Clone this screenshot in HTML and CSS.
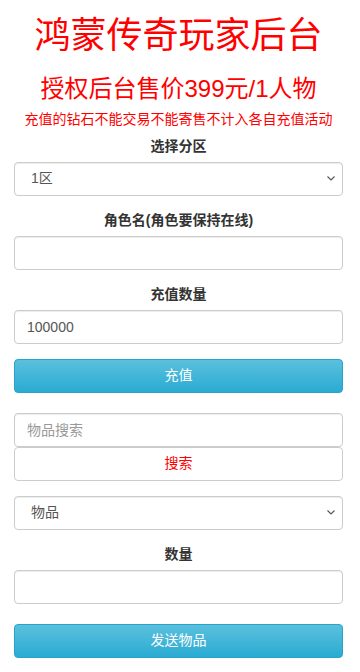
FILE: index.html
```html
<!DOCTYPE html>
<html lang="zh-CN">

<head>
    <meta charset="UTF-8">
    <meta name="viewport" content="width=device-width, initial-scale=1.0">
    <title>鸿蒙传奇玩家后台</title>
    <link rel="stylesheet" href="styles.css">
</head>

<body>
    <div class="container">
        <h1 class="titulo">鸿蒙传奇玩家后台</h1>
        <h3 class="preco">授权后台售价399元/1人物</h3>
        <p class="aviso">充值的钻石不能交易不能寄售不计入各自充值活动</p>

        <form id="rechargeForm">
            <div class="form-group">
                <label for="area">选择分区</label>
                <select id="area" class="form-control">
                    <option>1区</option>
                </select>
            </div>
            <div class="form-group">
                <label for="role">角色名(角色要保持在线)</label>
                <input type="text" id="role" class="form-control">
            </div>
            <div class="form-group">
                <label for="num">充值数量</label>
                <input type="text" id="num" class="form-control" value="100000">
            </div>
            <button type="button" class="btn btn-info">充值</button>
        </form>

        <form id="itemForm" class="item-form">
            <input type="text" class="form-control" placeholder="物品搜索">
            <button type="button" class="btn btn-default btn-search">搜索</button>
            <div class="form-group">
                <select class="form-control">
                    <option>物品</option>
                </select>
            </div>
            <div class="form-group">
                <label for="qty">数量</label>
                <input type="text" id="qty" class="form-control">
            </div>
            <button type="button" class="btn btn-info btn-send">发送物品</button>
        </form>
    </div>
</body>

</html>
```

FILE: styles.css
```css
/* Reset básico */
* {
    margin: 0;
    padding: 0;
    box-sizing: border-box;
}

body {
    font-family: "Helvetica Neue", Helvetica, "Liberation Sans", Arial, "Noto Sans CJK SC", sans-serif;
    font-size: 14px;
    line-height: 1.42857;
    color: #333;
    background-color: #fff;
}

.container {
    padding: 0 17px 30px 14px;
    text-align: center;
}

/* Cabeçalho */
.titulo {
    font-size: 36px;
    font-weight: 400;
    line-height: 1.1;
    color: #f00;
    margin: 16px 0 0;
}

.preco {
    font-size: 24px;
    font-weight: 400;
    line-height: 1.1;
    color: #f00;
    margin: 20px 0 0;
}

.aviso {
    color: #f00;
    margin: 8px 0 7px;
}

/* Formulário */
.form-group {
    margin-bottom: 15px;
}

label {
    display: inline-block;
    margin-bottom: 5px;
    font-weight: 700;
}

.form-control {
    display: block;
    width: 100%;
    height: 34px;
    padding: 6px 12px;
    font-family: inherit;
    font-size: 14px;
    line-height: 1.42857;
    color: #555;
    background-color: #fff;
    border: 1px solid #ccc;
    border-radius: 4px;
    box-shadow: inset 0 1px 1px rgba(0, 0, 0, .075);
    text-align: left;
}

.form-control::placeholder {
    color: #999;
}

/* Seta do select */
select.form-control {
    -webkit-appearance: none;
    appearance: none;
    padding-left: 16px;
    background-image: url("data:image/svg+xml,%3Csvg xmlns='http://www.w3.org/2000/svg' width='8' height='5' viewBox='0 0 8 5'%3E%3Cpath d='M0.5 0.5L4 4L7.5 0.5' fill='none' stroke='%23555' stroke-width='1.1'/%3E%3C/svg%3E");
    background-repeat: no-repeat;
    background-position: right 7px center;
    background-size: 8px 5px;
}

.btn {
    display: block;
    width: 100%;
    height: 34px;
    padding: 6px 12px;
    font-family: inherit;
    font-size: 14px;
    line-height: 1.42857;
    border: 1px solid transparent;
    border-radius: 4px;
    cursor: pointer;
}

.btn-info {
    color: #fff;
    background-color: #5bc0de;
    background-image: linear-gradient(to bottom, #5bc0de 0, #2aabd2 100%);
    border-color: #28a4c9;
}

.btn-default {
    color: #333;
    background-color: #fff;
    border-color: #ccc;
}

.btn-search {
    color: #f00;
    margin-bottom: 15px;
}

.item-form {
    margin-top: 20px;
}

.btn-send {
    margin-top: 20px;
}
```
